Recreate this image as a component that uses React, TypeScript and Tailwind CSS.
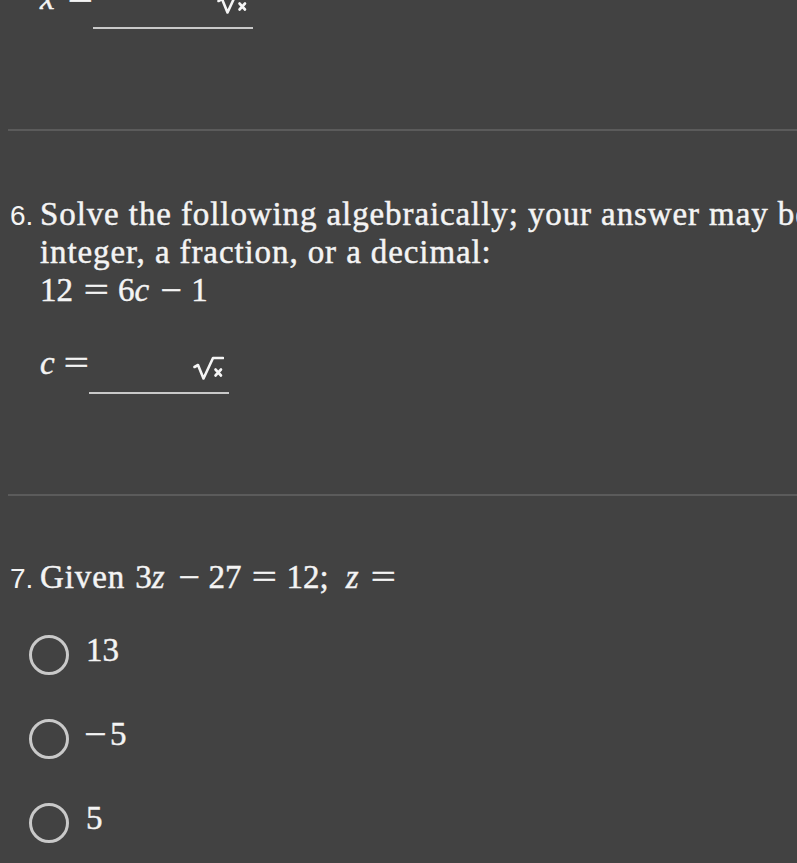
import React from "react";

function SqrtIcon() {
  return (
    <svg width="31" height="25" viewBox="0 0 31 25" fill="none" stroke="#f5f5f5" strokeLinecap="round" strokeLinejoin="round">
      <path d="M1.5 11 L5 9 L10.5 22.5 L20 2 H30" strokeWidth="2.6" />
      <path d="M22.5 13.5 L28 19.5 M28 13.5 L22.5 19.5" strokeWidth="2.6" />
    </svg>
  );
}

function Eq() {
  return (
    <span className="inline-block w-[25px] text-center">
      <span className="inline-block scale-x-[1.35]">=</span>
    </span>
  );
}

function Minus() {
  return (
    <span className="inline-block w-[21px] text-center">
      <span className="inline-block scale-x-[1.15]">−</span>
    </span>
  );
}

function Radio({ children }: { children: React.ReactNode }) {
  return (
    <div className="flex items-center pl-[29px]">
      <div className="w-[40px] h-[40px] rounded-full border-[3px] border-[#c9c9c9] shrink-0" />
      <div className="ml-[17px] -translate-y-[5px] flex items-baseline leading-[38px]">{children}</div>
    </div>
  );
}

export default function App() {
  return (
    <div className="w-full h-[863px] overflow-hidden bg-[#424242] text-[#f4f4f4] font-['Liberation_Serif','Times_New_Roman',serif] text-[33px] [-webkit-text-stroke:0.45px_#f4f4f4]">
      {/* partial previous answer row */}
      <div className="flex items-start pl-[40px] mt-[-21px]">
        <div className="w-[53px] flex items-baseline leading-[38px] whitespace-nowrap">
          <span className="italic">x</span>
          <span className="ml-[13px]"><Eq /></span>
        </div>
        <div className="w-[160px] h-[50px] border-b-2 border-[#c9c9c9] flex justify-end items-start pr-[5px] pt-[11px]">
          <SqrtIcon />
        </div>
      </div>

      <div className="ml-[8px] mt-[100px] h-[2px] bg-[#5b5b5b]" />

      {/* question 6 */}
      <div className="mt-[64px] flex items-baseline pl-[10px] leading-[38px]">
        <div className="w-[30px] shrink-0 font-['Liberation_Sans',Arial,sans-serif] text-[28px] [-webkit-text-stroke:0px]">6.</div>
        <div className="whitespace-nowrap">
          <div className="tracking-[0.9px]">Solve the following algebraically; your answer may be an</div>
          <div className="tracking-[0.9px]">integer, a fraction, or a decimal:</div>
          <div className="flex items-baseline">
            <span>12</span>
            <span className="ml-[11px]"><Eq /></span>
            <span className="ml-[9px]">6</span>
            <span className="italic">c</span>
            <span className="ml-[12px]"><Minus /></span>
            <span className="ml-[9px]">1</span>
          </div>
        </div>
      </div>

      {/* answer row */}
      <div className="mt-[35px] flex items-start pl-[40px]">
        <div className="w-[49px] flex items-baseline leading-[38px] whitespace-nowrap">
          <span className="italic">c</span>
          <span className="ml-[9px]"><Eq /></span>
        </div>
        <div className="w-[140px] h-[50px] border-b-2 border-[#c9c9c9] flex justify-end items-start pr-[5px] pt-[12px]">
          <SqrtIcon />
        </div>
      </div>

      <div className="ml-[8px] mt-[100px] h-[2px] bg-[#5b5b5b]" />

      {/* question 7 */}
      <div className="mt-[62px] flex items-baseline pl-[10px] leading-[38px] whitespace-nowrap">
        <div className="w-[30px] shrink-0 font-['Liberation_Sans',Arial,sans-serif] text-[28px] [-webkit-text-stroke:0px]">7.</div>
        <span className="tracking-[0.9px]">Given</span>
        <span className="ml-[10px]">3</span>
        <span className="italic">z</span>
        <span className="ml-[14px]"><Minus /></span>
        <span className="ml-[9px]">27</span>
        <span className="ml-[10px]"><Eq /></span>
        <span className="ml-[10px]">12;</span>
        <span className="ml-[17px] italic">z</span>
        <span className="ml-[12px]"><Eq /></span>
      </div>

      <div className="mt-[37px] flex flex-col gap-[44px]">
        <Radio>
          <span>13</span>
        </Radio>
        <Radio>
          <span className="inline-block w-[17px] text-center"><span className="inline-block scale-x-[1.2]">−</span></span>
          <span className="ml-[7px]">5</span>
        </Radio>
        <Radio>
          <span>5</span>
        </Radio>
      </div>
    </div>
  );
}
